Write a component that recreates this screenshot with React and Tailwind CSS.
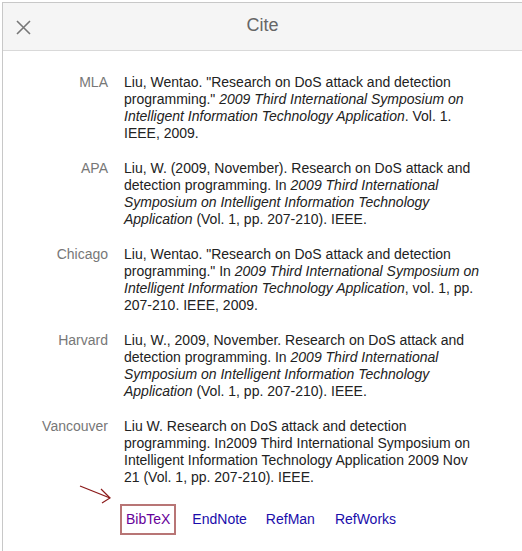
import React from 'react';

const citations = [
  {
    label: 'MLA',
    body: (
      <>
        Liu, Wentao. "Research on DoS attack and detection programming."{' '}
        <i>2009 Third International Symposium on Intelligent Information Technology Application</i>. Vol. 1. IEEE, 2009.
      </>
    ),
  },
  {
    label: 'APA',
    body: (
      <>
        Liu, W. (2009, November). Research on DoS attack and detection programming. In{' '}
        <i>2009 Third International Symposium on Intelligent Information Technology Application</i> (Vol. 1, pp. 207-210). IEEE.
      </>
    ),
  },
  {
    label: 'Chicago',
    body: (
      <>
        Liu, Wentao. "Research on DoS attack and detection programming." In{' '}
        <i>2009 Third International Symposium on Intelligent Information Technology Application</i>, vol. 1, pp. 207-210. IEEE, 2009.
      </>
    ),
  },
  {
    label: 'Harvard',
    body: (
      <>
        Liu, W., 2009, November. Research on DoS attack and detection programming. In{' '}
        <i>2009 Third International Symposium on Intelligent Information Technology Application</i> (Vol. 1, pp. 207-210). IEEE.
      </>
    ),
  },
  {
    label: 'Vancouver',
    body: (
      <>
        Liu W. Research on DoS attack and detection programming. In2009 Third International Symposium on Intelligent Information Technology Application 2009 Nov 21 (Vol. 1, pp. 207-210). IEEE.
      </>
    ),
  },
];

export default function App() {
  return (
    <div
      className="relative w-[522px] h-[551px] overflow-hidden bg-white flex pt-[2px] pl-[2px]"
      style={{ fontFamily: '"Liberation Sans", Arial, sans-serif' }}
    >
      {/* dialog */}
      <div className="flex-1 flex flex-col border-l border-t border-[#c8c8c8] bg-white">
        {/* header */}
        <div className="relative h-[48px] bg-[#f5f5f5] border-b border-[#d9d9d9] flex items-center justify-center pb-[3px]">
          <svg
            className="absolute left-[13px] top-[17px]"
            width="15"
            height="15"
            viewBox="0 0 15 15"
          >
            <path d="M1 1 L14 14 M14 1 L1 14" stroke="#777" strokeWidth="1.6" fill="none" />
          </svg>
          <span className="text-[18px] text-[#666] leading-none">Cite</span>
        </div>

        {/* citations */}
        <div className="pt-[23px] text-[14px] leading-[17px]">
          {citations.map((c) => (
            <div key={c.label} className="flex mb-[18px]">
              <div className="w-[105px] shrink-0 text-right text-[#777]">{c.label}</div>
              <div className="w-[356px] ml-[16px] text-[#222]">{c.body}</div>
            </div>
          ))}

          {/* export links */}
          <div className="flex items-center ml-[117px] text-[14px]">
            <span className="border-2 border-[#b87575] px-[4px] py-[5px] text-[#660099]">BibTeX</span>
            <span className="ml-[16px] text-[#1a0dab]">EndNote</span>
            <span className="ml-[19px] text-[#1a0dab]">RefMan</span>
            <span className="ml-[20px] text-[#1a0dab]">RefWorks</span>
          </div>
        </div>
      </div>

      {/* annotation arrow */}
      <svg className="absolute left-[78px] top-[484px]" width="36" height="22" viewBox="0 0 36 22">
        <path d="M2 2 L32 14" stroke="#8b1a1a" strokeWidth="1.2" fill="none" />
        <path d="M23 5 L32 14 L24 19" stroke="#8b1a1a" strokeWidth="1.2" fill="none" />
      </svg>
    </div>
  );
}
